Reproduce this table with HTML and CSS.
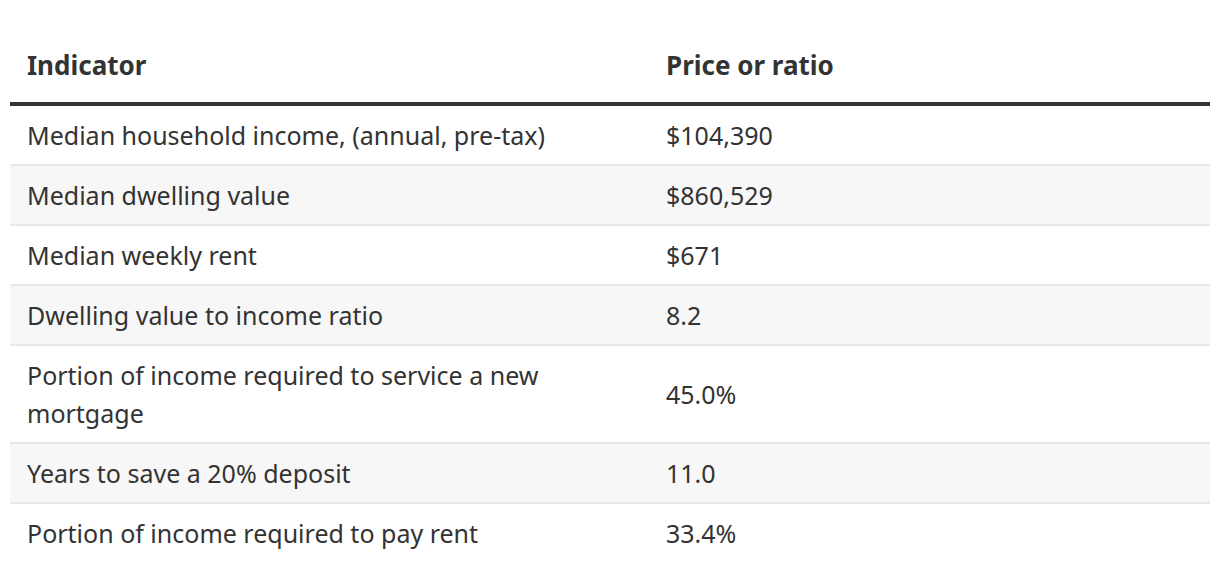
FILE: index.html
```html
<!DOCTYPE html>
<html><head><link rel="stylesheet" href="styles.css"></head>
<body>
<table class="data">
  <colgroup><col class="c1"><col class="c2"></colgroup>
  <thead>
    <tr><th>Indicator</th><th>Price or ratio</th></tr>
  </thead>
  <tbody>
    <tr><td>Median household income, (annual, pre-tax)</td><td>$104,390</td></tr>
    <tr><td>Median dwelling value</td><td>$860,529</td></tr>
    <tr><td>Median weekly rent</td><td>$671</td></tr>
    <tr><td>Dwelling value to income ratio</td><td>8.2</td></tr>
    <tr><td>Portion of income required to service a new mortgage</td><td>45.0%</td></tr>
    <tr><td>Years to save a 20% deposit</td><td>11.0</td></tr>
    <tr><td>Portion of income required to pay rent</td><td>33.4%</td></tr>
  </tbody>
</table>
</body></html>
```
FILE: styles.css
```css
body{margin:0;background:#fff;}
.data{
  margin:30px 0 0 10px;
  width:1200px;
  table-layout:fixed;
  border-collapse:separate;
  border-spacing:0;
  font-family:"Noto Sans",sans-serif;
  font-size:25px;
  line-height:38px;
  color:#333;
}
.c1{width:639px;}
.data th{
  text-align:left;
  font-weight:700;
  font-size:26px;
  padding:16px 17px 18px;
  border-bottom:4px solid #333;
}
.data td{
  padding:10px 17px;
  vertical-align:middle;
  border-bottom:2px solid #e8e8e8;
}
.data tbody tr:nth-child(even) td{background:#f7f7f7;}
.data tbody tr:last-child td{border-bottom:none;}
```
